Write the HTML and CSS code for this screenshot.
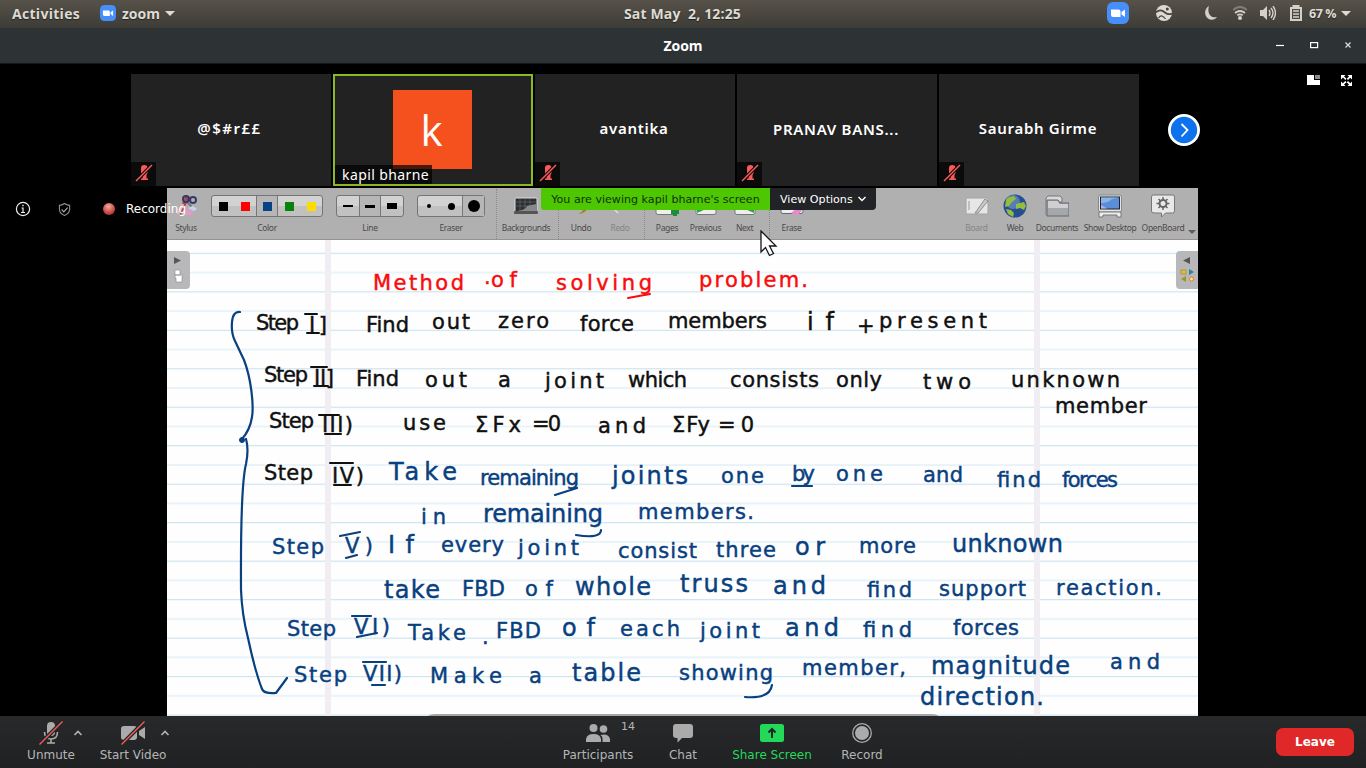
FILE: index.html
```html
<!DOCTYPE html>
<html lang="en">
<head>
<meta charset="utf-8">
<title>Zoom</title>
<link rel="stylesheet" href="styles.css">
</head>
<body>
<svg class="defs" aria-hidden="true">
  <symbol id="mic-off" viewBox="0 0 18 18"><rect x="6" y="1" width="6.500" height="10.500" rx="3.200"/><path d="M7.500 11h4v3.500h1.500V16H6v-1.500h1.500z"/><path d="M1 17L17 1" stroke="#0b0b0b" stroke-width="3.500"/><path d="M1 17L17 1" stroke="#fa5b5b" stroke-width="1.500"/></symbol>
  <symbol id="camera" viewBox="0 0 22 22"><rect width="22" height="22" rx="6" fill="#468efa"/><path d="M4 7.500h7.500a2 2 0 0 1 2 2V15H6a2 2 0 0 1-2-2zM14.500 10l3.500-2.500v7.500l-3.500-2.500z" fill="#fff"/></symbol>
  <symbol id="caret-up" viewBox="0 0 10 6"><path d="M1.500 5L5 1.500 8.500 5" fill="none" stroke="#b4b4b4" stroke-width="1.600"/></symbol>
</svg>

<header class="system-bar">
  <div class="system-left"><span class="activities">Activities</span><svg class="app-icon"><use href="#camera"/></svg><span>zoom</span><i class="arrow"></i></div>
  <div class="clock">Sat May&nbsp; 2, 12:25</div>
  <div class="system-right">
    <svg class="tray-zoom"><use href="#camera"/></svg>
    <svg class="tray-photo" viewBox="0 0 16 16"><circle cx="8" cy="8" r="8" fill="#dedad2"/><path d="M0 7.500C3 4.500 6 5 9 7.500s5 2 7 1" fill="none" stroke="#47443e" stroke-width="1.700"/><path d="M2.500 13c2-3 4-3 7 1" fill="none" stroke="#47443e" stroke-width="1.200"/><circle cx="11.300" cy="4" r="1.500" fill="#47443e"/></svg>
    <svg class="tray-moon" viewBox="0 0 12 14"><path d="M4 0C-1 3-1 9 3 12.500c3 2.200 7 1.500 9-1.500C5 13 2 6 4 0z" fill="#d4d1ca"/></svg>
    <svg class="tray-wifi" viewBox="0 0 14 14"><path d="M0 4q7-6 14 0" fill="none" stroke="#817e77" stroke-width="2"/><path d="M2 7q5-4 10 0M4.300 9.300q2.700-2 5.400 0" fill="none" stroke="#d4d1ca" stroke-width="1.700"/><circle cx="7" cy="12" r="2" fill="#d4d1ca"/></svg>
    <svg class="tray-sound" viewBox="0 0 16 14"><path d="M0 4h3l4-4v14l-4-4H0z" fill="#d4d1ca"/><path d="M9 4q2 3 0 6M11 2q4 5 0 10M13 0q5 7 0 14" fill="none" stroke="#d4d1ca" stroke-width="1.400"/></svg>
    <svg class="tray-battery" viewBox="0 0 12 16"><path d="M3.500 2V1h5v1" fill="none" stroke="#d4d1ca" stroke-width="2"/><rect x="1" y="3" width="10" height="12" fill="none" stroke="#d4d1ca" stroke-width="2"/><path d="M3 6h6M3 9h6M3 12h6" stroke="#d4d1ca" stroke-width="1.500"/></svg>
    <span class="battery-level">67 %</span><i class="arrow"></i>
  </div>
</header>

<div class="title-bar">
  <span class="window-title">Zoom</span>
  <svg class="window-buttons" viewBox="0 0 76 10"><path d="M0 5.500h8" stroke="#fff" stroke-width="1.200"/><rect x="34.600" y="2.600" width="7" height="5" fill="none" stroke="#fff" stroke-width="1.200"/><path d="M69.500 2.500l5 5m0-5l-5 5" stroke="#ddd" stroke-width="1.200"/></svg>
</div>

<main class="meeting">
  <section class="gallery">
    <div class="tile"><b class="sym">@$#r££</b><span class="muted"><svg><use href="#mic-off"/></svg></span></div>
    <div class="tile speaking"><div class="avatar">k</div><span class="name-tag">kapil bharne</span></div>
    <div class="tile"><b>avantika</b><span class="muted"><svg><use href="#mic-off"/></svg></span></div>
    <div class="tile"><b class="long">PRANAV BANS...</b><span class="muted"><svg><use href="#mic-off"/></svg></span></div>
    <div class="tile"><b class="wide">Saurabh Girme</b><span class="muted"><svg><use href="#mic-off"/></svg></span></div>
    <svg class="next-page" viewBox="0 0 32 32"><circle cx="16" cy="16" r="14.600" fill="#0e72ed" stroke="#fff" stroke-width="2.800"/><path d="M13.500 10l6 6-6 6.500" fill="none" stroke="#fff" stroke-width="1.800"/></svg>
    <svg class="view-buttons" viewBox="0 0 46 12"><path d="M0 1h7v5h6v5H0z" fill="#fff"/><rect x="8" y="1" width="5" height="4" fill="#8b8b8b"/><path d="M34 1h4.500L37 2.500l2.500 2.300-1.200 1.200L36 3.500 34 5.500zM45 1v4.500l-1.800-1.800L41 6l-1.200-1.200L42 2.500 40.500 1zM34 12V7.500l1.800 1.800L38.300 7l1.200 1.200L37 10.500l1.500 1.500zM45 12h-4.500l1.500-1.500-2.300-2.300L41 7l2.300 2.300L45 7.500z" fill="#fff"/></svg>
  </section>

  <section class="stage">
    <div class="status">
      <svg class="info" viewBox="0 0 16 16" fill="none" stroke="#eee" stroke-width="1.200"><circle cx="8" cy="8" r="6.600"/><path d="M6.500 7H8v4.500M6 11.500h4" /><path d="M7.300 4.500h1.400" stroke-width="1.500"/></svg>
      <svg class="shield" viewBox="0 0 14 15" fill="none" stroke="#8f8f8f" stroke-width="1.200"><path d="M7 1q3 2 5.500 2v4.500Q12 12 7 14 2 12 1.500 7.500V3Q4 3 7 1z"/><path d="M4 7.500L6.300 10l4-4.500" stroke="#aaa"/></svg>
      <i class="rec-dot"></i><span>Recording</span>
    </div>
    <div class="share-banner"><span class="viewing">You are viewing kapil bharne's screen</span><span class="options">View Options <svg viewBox="0 0 8 6"><path d="M.5 1L4 4.500 7.500 1" fill="none" stroke="#fff" stroke-width="1.500"/></svg></span></div>

    <div class="board">
      <div class="toolbar">
        <div class="tool"><svg class="ico" viewBox="0 0 24 24"><path d="M14 2L5 20" stroke="#b04045" stroke-width="4"/><path d="M9 10L4 20" stroke="#e8b2bc" stroke-width="3"/><path d="M9 4l9 9" stroke="#777487" stroke-width="2"/><circle cx="12" cy="5" r="3" fill="none" stroke="#393865" stroke-width="2"/><circle cx="19" cy="6" r="3" fill="none" stroke="#393865" stroke-width="2"/><path d="M14 14l5-2 4 3-8 7-5-2z" fill="#dc9ec2"/><path d="M14 14l5-2 4 3-3 2z" fill="#b9dce9"/></svg><span>Stylus</span></div>
        <div class="tool"><div class="box colors"><i class="black"></i><i class="red"></i><i class="blue chosen"></i><i class="green"></i><i class="yellow"></i></div><span>Color</span></div>
        <div class="tool"><div class="box lines"><i></i><i class="chosen"></i><i></i></div><span>Line</span></div>
        <div class="tool"><div class="box erasers"><i></i><i></i><i class="chosen"></i></div><span>Eraser</span></div>
        <div class="tool divided"><svg class="ico" viewBox="0 0 24 24"><rect x="1" y="4" width="22" height="14" rx="1.500" fill="#2c2e30" stroke="#ddd"/><path d="M2 8h20M2 12h20M6 5v12M11 5v12M16 5v12" stroke="#63676a" stroke-width=".7"/><path d="M3 17q9-1 10-5l9-2v7z" fill="#858a8c"/><rect y="17" width="24" height="3" rx="1" fill="#555"/></svg><span>Backgrounds</span></div>
        <div class="tool divided-late"><svg class="ico" viewBox="0 0 24 24"><path d="M14 13q1 5-5 7 8 0 10-7z" fill="#a88030"/></svg><span>Undo</span></div>
        <div class="tool faded"><svg class="ico" viewBox="0 0 24 24"><path d="M5 14l5 5" stroke="#ddd" stroke-width="1.500"/></svg><span>Redo</span></div>
        <div></div>
        <div class="tool divided-tight"><svg class="ico" viewBox="0 0 24 24"><rect x="1" y="5" width="22" height="15.500" rx="2" fill="#eee" stroke="#777"/><path d="M20 14v8m-4-4h8" stroke="#208b3b" stroke-width="4"/></svg><span>Pages</span></div>
        <div class="tool"><svg class="ico" viewBox="0 0 24 24"><rect x="2" y="5" width="20" height="15.500" rx="2" fill="#eee" stroke="#777"/><path d="M3 19V11l9 4z" fill="#2baa45"/></svg><span>Previous</span></div>
        <div class="tool"><svg class="ico" viewBox="0 0 24 24"><rect x="2" y="5" width="20" height="15.500" rx="2" fill="#eee" stroke="#777"/><path d="M21 19V11l-9 4z" fill="#2baa45"/></svg><span>Next</span></div>
        <div></div>
        <div class="tool divided-tight"><svg class="ico" viewBox="0 0 24 24"><rect x="1" y="5" width="22" height="14.500" rx="2" fill="#eee" stroke="#667"/><path d="M11 19l6-5h7l-6 7h-4z" fill="#e48acd"/></svg><span>Erase</span></div>
        <div></div>
        <div class="tool faded"><svg class="ico" viewBox="0 0 24 24"><rect x="1" y="4" width="22" height="16" rx="1" fill="#e6e6e6" stroke="#a2a2a2"/><path d="M4 7v9" stroke="#999"/><path d="M10 19L20 5l3 2-10 12z" fill="#c8c8c8" stroke="#8d8d8d"/></svg><span>Board</span></div>
        <div class="tool"><svg class="ico" viewBox="0 0 24 24"><circle cx="12" cy="12" r="11.500" fill="#264d91"/><circle cx="10" cy="8" r="7" fill="#527fb9"/><path d="M4 4l7-2 2 3-4 3-3 4-4 1 1-7zM13 10l8-2 2 4-2 4-4-2-4 1zM3 15l5 1 3 3-1 4-5-3z" fill="#94bd3e"/></svg><span>Web</span></div>
        <div class="tool"><svg class="ico" viewBox="0 0 24 24"><path d="M1 21V4l2-2h12l2 2v4H4v13" fill="#d8d9da" stroke="#777"/><path d="M2 22V6h11l2 3h9v13z" fill="#a5a8ab" stroke="#666"/><path d="M3 7h9.500l2 3H23v4H3z" fill="#cdcfd2"/></svg><span>Documents</span></div>
        <div class="tool"><svg class="ico" viewBox="0 0 24 24"><rect x=".5" y="1" width="23" height="17" rx="2" fill="#e5e5e5" stroke="#888"/><rect x="2.500" y="3" width="19" height="12" fill="#5a8ed8" stroke="#222"/><path d="M3 14.500V9q7 0 11-4l7-1.500H3z" fill="#8db4ea"/><path d="M3 14.500V11l6 3.500z" fill="#b7b2ee"/><path d="M1 23v-5h22v5h-4v-2H5v2z" fill="#eee" stroke="#777"/></svg><span>Show Desktop</span></div>
        <div class="tool"><svg class="ico" viewBox="0 0 24 24"><path d="M2 1h20q1.500 0 1.500 2v14q0 2-2 2h-7l-4 4v-4H3q-2.500 0-2.500-2V3Q.500 1 2 1z" fill="#e9e9e9" stroke="#777"/><circle cx="12" cy="9.500" r="3.500" fill="none" stroke="#666" stroke-width="2"/><path d="M12 3v3m0 7v3M5.500 9.500h3m7 0h3M7.500 5l2 2m5 5l2 2m0-9l-2 2m-5 5l-2 2" stroke="#666" stroke-width="1.500"/></svg><span>OpenBoard</span></div>
        <i class="overflow"></i>
      </div>

      <svg class="paper" viewBox="167 240 1031 476">
        <defs><pattern id="rules" x="167" y="252.800" width="1031" height="38.480" patternUnits="userSpaceOnUse"><rect width="1031" height="1.100" fill="#c9e2ee"/><rect y="19.240" width="1031" height="1.100" fill="#d8ebf6"/></pattern></defs>
        <rect x="167" y="240" width="1031" height="476" fill="#fefefe"/>
        <rect x="167" y="252" width="1031" height="464" fill="url(#rules)"/>
        <path d="M328 240v476M1037 240v476" stroke="#f0eef2" stroke-width="6"/>

        <g class="ink red-ink">
          <text x="373" y="290" textLength="91">Method</text><text x="484" y="284">.</text><text x="491" y="287" textLength="26">of</text><text x="556" y="290" textLength="96">solving</text><text x="699" y="287" textLength="109">problem.</text>
          <path d="M628 298l22-4"/>
        </g>
        <g class="ink">
          <text x="256" y="330" textLength="43">Step</text><text x="309" y="332" textLength="18">I]</text><text x="366" y="332" textLength="43">Find</text><text x="432" y="329" textLength="38">out</text><text x="498" y="328" textLength="51">zero</text><text x="580" y="331" textLength="54">force</text><text x="668" y="328" textLength="99">members</text><text class="large" x="807" y="330" textLength="27">if</text><text x="857" y="333" textLength="20">+</text><text x="879" y="328" textLength="108">present</text>
          <text x="264" y="382" textLength="44">Step</text><text x="314" y="385" textLength="20">II]</text><text x="356" y="386" textLength="43">Find</text><text x="425" y="387" textLength="42">out</text><text x="498" y="387">a</text><text x="545" y="388" textLength="59">joint</text><text x="628" y="387" textLength="59">which</text><text x="730" y="387" textLength="89">consists</text><text x="836" y="387" textLength="46">only</text><text x="923" y="389" textLength="48">two</text><text x="1011" y="387" textLength="109">unknown</text><text x="1055" y="413" textLength="92">member</text>
          <text x="269" y="428" textLength="45">Step</text><text x="322" y="432" textLength="31">III)</text><text x="403" y="430" textLength="43">use</text><text x="475" y="432" textLength="46">ΣFx</text><text x="532" y="431" textLength="29">=0</text><text x="598" y="433" textLength="48">and</text><text x="672" y="432" textLength="38">ΣFy</text><text x="718" y="432" textLength="36">=0</text>
          <text x="264" y="480" textLength="49">Step</text><text x="332" y="483" textLength="32">IV)</text>
          <path d="M305 314h12M307 333h12M311 367h16M314 386h14M319 415h20M325 434h16M330 463h23M334 485h17"/>
        </g>
        <g class="ink blue-ink">
          <text class="large" x="389" y="480" textLength="68">Take</text><text x="480" y="485" textLength="99">remaining</text><text class="large" x="612" y="484" textLength="76">joints</text><text x="721" y="483" textLength="43">one</text><text x="792" y="481" textLength="23">by</text><text x="836" y="481" textLength="47">one</text><text x="923" y="482" textLength="40">and</text><text x="997" y="487" textLength="44">find</text><text x="1062" y="487" textLength="56">forces</text>
          <text x="421" y="524" textLength="25">in</text><text class="large" x="483" y="522" textLength="120">remaining</text><text x="638" y="519" textLength="116">members.</text>
          <text x="272" y="554" textLength="52">Step</text><text x="345" y="553" textLength="28">V)</text><text class="large" x="388" y="553" textLength="26">If</text><text x="441" y="552" textLength="63">every</text><text x="518" y="555" textLength="61">joint</text><text x="618" y="558" textLength="79">consist</text><text x="716" y="557" textLength="60">three</text><text class="large" x="795" y="555" textLength="30">or</text><text x="859" y="553" textLength="57">more</text><text class="large" x="952" y="552" textLength="111">unknown</text>
          <text class="large" x="384" y="598" textLength="56">take</text><text x="462" y="596" textLength="43">FBD</text><text x="525" y="596" textLength="28">of</text><text class="large" x="575" y="595" textLength="76">whole</text><text class="large" x="680" y="592" textLength="68">truss</text><text class="large" x="773" y="594" textLength="53">and</text><text x="867" y="597" textLength="45">find</text><text x="939" y="596" textLength="87">support</text><text x="1056" y="595" textLength="106">reaction.</text>
          <text x="287" y="636" textLength="49">Step</text><text x="354" y="634" textLength="36">VI)</text><text x="408" y="640" textLength="58">Take</text><text x="482" y="644">.</text><text x="496" y="638" textLength="45">FBD</text><text class="large" x="562" y="636" textLength="33">of</text><text x="620" y="636" textLength="60">each</text><text x="700" y="638" textLength="60">joint</text><text class="large" x="785" y="636" textLength="54">and</text><text x="863" y="637" textLength="49">find</text><text x="953" y="635" textLength="66">forces</text>
          <text x="294" y="682" textLength="53">Step</text><text x="363" y="681" textLength="39">VII)</text><text x="430" y="683" textLength="72">Make</text><text x="529" y="683">a</text><text class="large" x="572" y="681" textLength="69">table</text><text x="679" y="680" textLength="94">showing</text><text x="802" y="675" textLength="104">member,</text><text class="large" x="931" y="674" textLength="139">magnitude</text><text x="1110" y="669" textLength="50">and</text><text class="large" x="920" y="705" textLength="124">direction.</text>
          <path d="M555 495l22-7M792 486h20M576 535q25 4 25-5M340 536l20-4M346 558l11-3M352 616h19M357 637l20-4M363 662h23M372 685h13M745 697q25 2 27-12"/>
          <path d="M240 312q-7-1-8 10t3 19l9 19c7 18 10 45 8 57q-2 13-10 22m4 0q3 10 0 25c-6 24-5 104-5 126q1 25 7 48 7 33 14 51 2 5 14 4l11-15"/><circle cx="242" cy="440" r="2.500"/>
        </g>
        <path d="M428 716q2-2 7-2h497q4 0 7 2z" fill="#a6a6a6"/>
        <path d="M167 251h19q4 0 4 4v30q0 4-4 4h-19zM1198 251h-18q-4 0-4 4v30q0 4 4 4h18z" fill="#b8b7b9"/>
        <path d="M174 257l7 3.500-7 3.500zM1190 257l-7 3.500 7 3.500z" fill="#555"/>
        <path d="M175 270h5v4h2v8h-6v-4h-1z" fill="#fff" stroke="#888" stroke-width=".6"/><path d="M175 275h6" stroke="#777"/>
        <rect x="1181" y="270" width="5" height="4" fill="#dfbe37" stroke="#a68d27" stroke-width=".7"/><path d="M1189 269l5 3-5 3z" fill="#35809c"/><path d="M1186 276v6l-5-3z" fill="#969c20"/><circle cx="1191.500" cy="279" r="2" fill="#ffe0a0" stroke="#e48516"/>
      </svg>
      <svg class="cursor" viewBox="0 0 18 27"><path d="M1 1v21l4.500-4.500 4 8 4-2-4-7.500H16z" fill="#fff" stroke="#161616" stroke-width="1.300"/></svg>
    </div>
  </section>
</main>

<footer class="controls">
  <div class="control"><div class="pic"><svg class="big" viewBox="0 0 24 24" fill="#ababab"><rect x="8" y="1" width="8" height="14" rx="4"/><path d="M5.500 11q0 7 6.500 7t6.500-7M12 18v4M8 22h8" fill="none" stroke="#ababab" stroke-width="1.600"/><path d="M1 23L23 1" stroke="#232527" stroke-width="4"/><path d="M.5 23.500L23.500.5" stroke="#f05b57" stroke-width="1.400"/></svg></div><span>Unmute</span></div>
  <svg class="caret"><use href="#caret-up"/></svg>
  <div class="control"><div class="pic"><svg class="big" viewBox="0 0 24 24" fill="#ababab"><rect y="5" width="16" height="14" rx="3"/><path d="M18 10l6-4v12l-6-4z"/><path d="M1 23L23 1" stroke="#232527" stroke-width="4"/><path d="M.5 23.500L23.500.5" stroke="#f05b57" stroke-width="1.400"/></svg></div><span>Start Video</span></div>
  <svg class="caret second"><use href="#caret-up"/></svg>
  <div class="control people"><div class="pic"><svg class="big" viewBox="0 0 24 24" fill="#ababab"><circle cx="7.500" cy="7" r="4"/><circle cx="17.500" cy="8" r="3.800"/><path d="M0 21v-3q1-5 7.500-5t7.500 5v3zM16.500 21v-4q-.5-2-2-3 8-2 9.500 4v3z"/></svg></div><span>Participants</span><em>14</em></div>
  <div class="control chat"><div class="pic"><svg class="big" viewBox="0 0 24 24" fill="#ababab"><path d="M5 3h14q3 0 3 3v8q0 3-3 3h-8l-4.500 4.500V17H5q-3 0-3-3V6q0-3 3-3z"/></svg></div><span>Chat</span></div>
  <div class="control share"><div class="pic"><svg class="big" viewBox="0 0 24 24"><rect y="3" width="24" height="18" rx="2.500" fill="#23d959"/><path d="M12 17V8M8.500 11.500L12 8l3.500 3.500" fill="none" stroke="#232527" stroke-width="2"/></svg></div><span>Share Screen</span></div>
  <div class="control record"><div class="pic"><svg class="big" viewBox="0 0 24 24"><circle cx="12" cy="12" r="9.300" fill="none" stroke="#ababab" stroke-width="1.300"/><circle cx="12" cy="12" r="7" fill="#ababab"/></svg></div><span>Record</span></div>
  <button class="leave">Leave</button>
</footer>
</body>
</html>
```
FILE: styles.css
```css
* { box-sizing: border-box; }
body { margin: 0; width: 1366px; height: 768px; overflow: hidden; background: #000; color: #fff; font-family: "DejaVu Sans", sans-serif; display: flex; flex-direction: column; }
.defs { position: absolute; width: 0; height: 0; }
svg { display: block; flex: none; }

.system-bar { height: 28px; padding: 0 15px 2px 12px; display: grid; grid-template-columns: 1fr auto 1fr; align-items: center; background: linear-gradient(#575249, #3d3c37); color: #dfdbd2; font: 700 14px "Open Sans", sans-serif; text-shadow: 0 1px 1px #222; }
.system-left, .system-right { display: flex; align-items: center; }
.activities { width: 88px; letter-spacing: .3px; }
.app-icon { width: 16px; height: 16px; margin-right: 6px; }
.arrow { border: 5px solid transparent; border-top-color: #dfdbd2; border-bottom: 0; margin-left: 5px; }
.clock { font-size: 14px; letter-spacing: .15px; padding-left: 2px; }
.system-right { justify-content: flex-end; }
.tray-zoom { width: 22px; height: 22px; margin-right: 27px; }
.tray-photo { width: 16px; height: 16px; margin-right: 33px; }
.tray-moon { width: 12px; height: 14px; margin-right: 16px; }
.tray-wifi { width: 14px; height: 14px; margin-right: 13px; }
.tray-sound { width: 16px; height: 14px; margin-right: 14px; }
.tray-battery { width: 12px; height: 16px; margin-right: 7px; }
.battery-level { width: 27px; font-size: 12.500px; white-space: nowrap; letter-spacing: -.4px; }

.title-bar { height: 36px; display: grid; grid-template-columns: 1fr auto 1fr; align-items: center; background: #2d3235; border-bottom: 1px solid #14171a; }
.window-title { grid-column: 2; font: 700 14px "Open Sans", sans-serif; }
.window-buttons { width: 76px; height: 10px; justify-self: end; margin: 0 14px 2px 0; }

.meeting { flex: 1; display: flex; flex-direction: column; }
.gallery { height: 124px; padding: 10px 13px 0 131px; display: flex; gap: 2px; }
.tile { position: relative; width: 200px; height: 112px; background: #222; display: flex; align-items: center; justify-content: center; flex: none; }
.tile b { font: 600 15px "Noto Sans", sans-serif; letter-spacing: .7px; padding: 0 2px 4px 0; white-space: nowrap; }
.tile .sym { letter-spacing: 1.500px; padding-right: 3px; }
.tile .long { padding-bottom: 2px; }
.muted { position: absolute; left: 0; bottom: 0; width: 25px; height: 24px; background: #0b0b0b; padding: 2px 4px; }
.muted svg { width: 18px; height: 18px; fill: #f85a59; }
.speaking { border: 2px solid #8ab927; }
.avatar { width: 79px; height: 79px; background: #f5511e; display: flex; align-items: center; justify-content: center; font: 500 42px "Open Sans", sans-serif; padding: 0 2px 0 0; margin: -2px 0 0 -1px; }
.name-tag { position: absolute; left: 0; bottom: 0; width: 97px; height: 19px; padding-left: 7px; background: rgba(0,0,0,.7); font: 14px/19px "Noto Sans", sans-serif; white-space: nowrap; letter-spacing: .4px; }
.next-page { width: 32px; height: 32px; margin: 40px 0 0 27px; }
.view-buttons { width: 46px; height: 12px; margin-left: auto; }

.stage { position: relative; height: 528px; padding-left: 167px; }
.status { position: absolute; z-index: 2; left: 15px; top: 13px; display: flex; align-items: center; font-size: 12px; }
.info { width: 16px; height: 16px; margin-right: 27px; }
.shield { width: 13px; height: 15px; margin-right: 32px; }
.rec-dot { width: 12px; height: 12px; border-radius: 50%; background: radial-gradient(circle at 45% 30%, #f1aaa2, #cc4c43 55%, #7e2c27); margin-right: 11px; }
.share-banner { position: absolute; z-index: 2; left: 541px; top: 0; display: flex; height: 22px; font-size: 11.100px; line-height: 23px; white-space: nowrap; }
.viewing { width: 229px; text-align: center; background: #4cc702; color: #17300a; border-radius: 0 0 0 3px; }
.options { width: 106px; padding-left: 10px; display: flex; align-items: center; gap: 5px; background: #222326; border-radius: 0 0 4px 0; }
.options svg { width: 8px; height: 6px; }
.board { position: relative; width: 1031px; height: 528px; }
.toolbar { position: relative; height: 52px; display: grid; grid-template-columns: 38px 124px 82px 80px 70px 40px 38px 8px 40px 37px 41px 7px 39px 145px 41px 36px 48px 58px 48px 11px; background: #b1b0b1; border-bottom: 1px solid #949394; }
.tool { position: relative; display: flex; flex-direction: column; align-items: center; padding-top: 6px; color: #4b4a4b; font: 8.500px/10px "Noto Sans", sans-serif; letter-spacing: -.35px; }
.tool > span { margin-top: 5px; white-space: nowrap; }
.faded > span { color: #858485; }
.ico { width: 24px; height: 24px; }
.divided::before, .divided-late::before, .divided-tight::before { content: ""; position: absolute; top: 1px; height: 50px; left: 5px; border-left: 1px dotted #8c8b8c; }
.divided-late::before, .divided-tight::before { left: -3px; }
.box { display: flex; height: 22px; margin: 1px 0; border: 1px solid #767576; border-radius: 3px; background: linear-gradient(#d3d2d3 50%, #c2c1c2 50%); }
.box i { width: 22px; display: flex; align-items: center; justify-content: center; }
.box i::before { content: ""; width: 9px; height: 9px; background: currentColor; }
.chosen { background: #b7b6b7; border-left: 1px solid #777; border-right: 1px solid #777; }
.black, .lines i, .erasers i { color: #000; }
.red { color: #f00; }
.blue { color: #064285; }
.green { color: #078407; }
.yellow { color: #ffdc00; }
.lines i::before { width: 10px; height: 2px; }
.lines i:nth-child(2)::before { height: 3px; }
.lines i:nth-child(3)::before { height: 6px; }
.erasers i::before { width: 4px; height: 4px; border-radius: 50%; }
.erasers i:nth-child(2)::before { width: 7px; height: 7px; }
.erasers i:nth-child(3)::before { width: 12px; height: 12px; }
.erasers .chosen { border-right: 0; }
.overflow { align-self: end; margin: 0 0 5px 1px; width: 8px; height: 4px; border: 4px solid transparent; border-top-color: #5d5c5d; border-bottom: 0; }
.paper { width: 1031px; height: 476px; }
.ink { font: 21px "DejaVu Sans", sans-serif; fill: #101010; stroke: #101010; }
.ink text { stroke-width: .45; }
.ink .large { font-size: 24px; }
.ink path { fill: none; stroke-width: 2; stroke-linecap: round; stroke-linejoin: round; }
.red-ink { fill: #f80c0c; stroke: #f80c0c; }
.blue-ink { fill: #084080; stroke: #084080; }
.blue-ink path { stroke-width: 2.200; }
.cursor { position: absolute; left: 593px; top: 42px; width: 18px; height: 27px; }

.controls { height: 52px; padding: 5px 12px 0 21px; display: flex; background: linear-gradient(#27292b, #1f2123); color: #b5b5b5; font-size: 12px; }
.control { position: relative; width: 60px; display: flex; flex-direction: column; align-items: center; white-space: nowrap; flex: none; }
.pic { height: 26px; }
.big { width: 24px; height: 24px; }
.control span { line-height: 16px; }
.caret { width: 10px; height: 6px; margin: 9px 10px 0 -8px; }
.caret + .control { width: 80px; }
.caret.second { margin-left: -13px; margin-right: 0; }
.caret.second + .people { width: 80px; margin-left: 388px; }
.people em { position: absolute; left: 63px; top: -1px; font: 11px "DejaVu Sans", sans-serif; }
.chat { margin-left: 15px; }
.share { width: 90px; margin-left: 14px; color: #23d959; }
.record { margin-left: 15px; }
.leave { width: 78px; height: 28px; margin: 7px 0 0 auto; border: 0; border-radius: 7px; background: #e02828; color: #fff; font: 700 12px "DejaVu Sans", sans-serif; }
```
